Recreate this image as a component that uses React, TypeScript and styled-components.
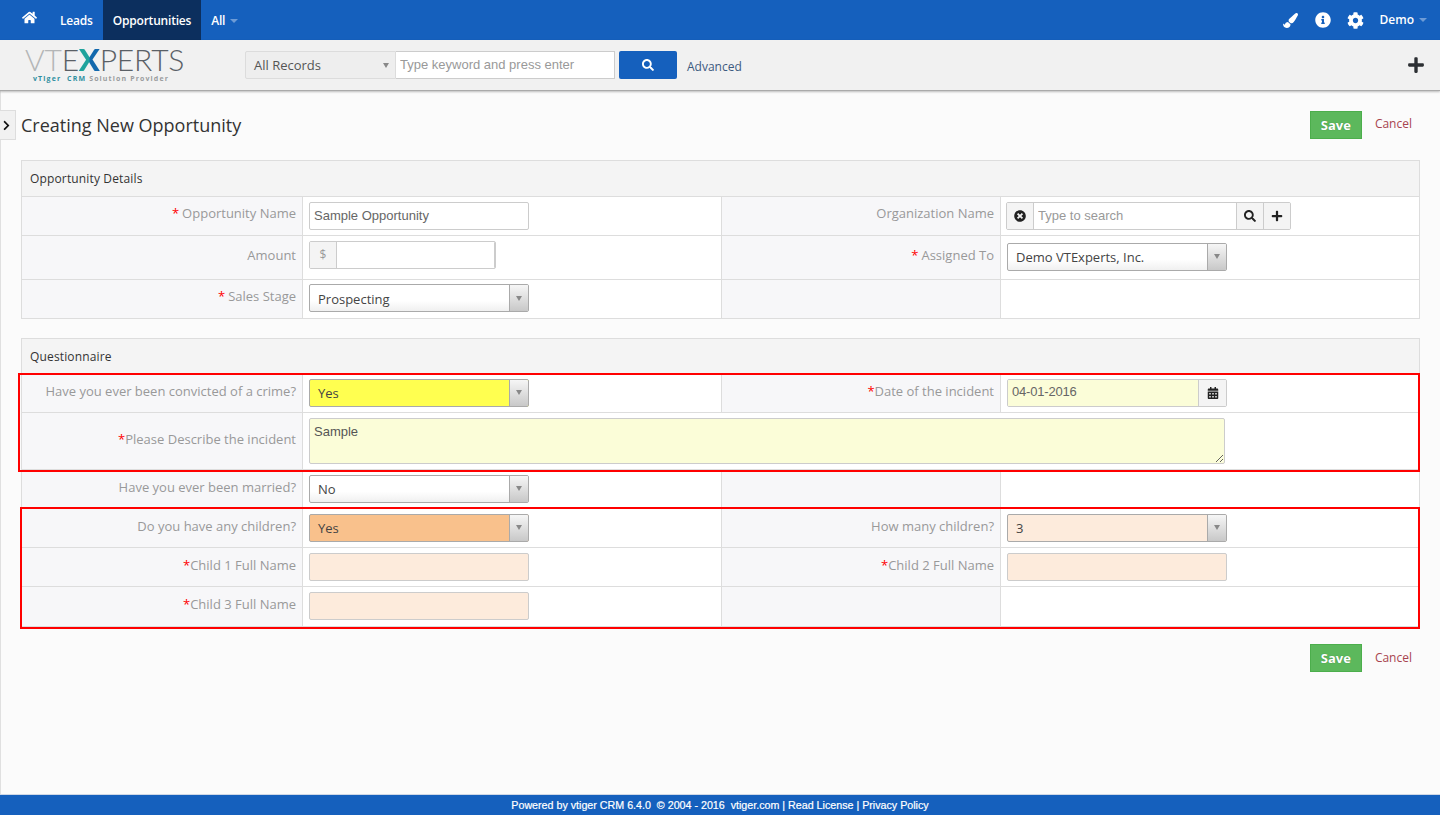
import React from "react";
import styled, { createGlobalStyle } from "styled-components";
import {
  FaHome, FaPaintBrush, FaInfoCircle, FaCog, FaPlus, FaSearch,
  FaCalendarAlt, FaChevronRight, FaTimesCircle,
} from "react-icons/fa";

const Global = createGlobalStyle`
  html, body { margin: 0; padding: 0; height: 100%; }
  body { font-family: "Open Sans", "Liberation Sans", sans-serif; font-size: 13px; color: #333; background: #fbfbfb; }
  * { box-sizing: border-box; }
`;

const Page = styled.div`
  height: 815px; display: flex; flex-direction: column; overflow: hidden;
`;

const TopBar = styled.header`
  height: 40px; flex: none; background: #1560bd; color: #fff; display: flex; align-items: stretch;
  padding-left: 22px; font-size: 12px; font-weight: 600;
`;
const NavHome = styled.div`
  width: 28px; display: flex; align-items: center; font-size: 15px; padding-bottom: 6px;
`;
const NavItem = styled.div<{ $active?: boolean }>`
  display: flex; align-items: center; gap: 5px; padding: 0 10px; letter-spacing: -0.2px;
  background: ${(p) => (p.$active ? "#0c2f5e" : "transparent")};
`;
const Caret = styled.span`
  width: 0; height: 0; border-left: 4px solid transparent; border-right: 4px solid transparent;
  border-top: 4px solid #6d9bd6; margin-top: 1px;
`;
const NavRight = styled.div`
  margin-left: auto; display: flex; align-items: center; padding-right: 13px;
`;
const NavIcon = styled.span<{ $size: number; $gap: number }>`
  display: flex; font-size: ${(p) => p.$size}px; margin-right: ${(p) => p.$gap}px;
`;
const UserName = styled.span`
  display: flex; align-items: center; gap: 5px; padding-bottom: 1px;
`;

const SearchBar = styled.div`
  height: 51px; flex: none; background: #f1f1f1; border-bottom: 1px solid #aaa;
  box-shadow: 0 1px 2px rgba(0,0,0,.25); display: flex; align-items: center;
  padding: 0 15px 0 25px; position: relative; z-index: 2;
`;
const Logo = styled.div`
  width: 220px; flex: none; display: flex; flex-direction: column; gap: 2px; margin-top: -1px;
`;
const LogoWord = styled.div`
  font-family: "Lato", "Open Sans", sans-serif; font-weight: 300; font-size: 30px; line-height: 26px;
  letter-spacing: -0.2px; color: #5a6066; white-space: nowrap; height: 26px;
`;
const LogoLight = styled.span`
  color: #b4b6b7;
`;
const LogoX = styled.span`
  font-weight: 900; font-size: 31px; background: linear-gradient(90deg, #1fa39c 0%, #1fa39c 48%, #1268ad 52%, #1268ad 100%);
  -webkit-background-clip: text; background-clip: text; color: transparent;
`;
const LogoTag = styled.div`
  font-size: 7px; line-height: 9px; font-weight: 700; letter-spacing: 1.13px; color: #9a9c9e; padding-left: 8px; white-space: nowrap;
`;
const LogoTeal = styled.span`
  color: #2f8fa0;
`;
const RecordSelect = styled.div`
  width: 151px; height: 28px; background: #eeeeee; border: 1px solid #dcdcdc; border-radius: 2px 0 0 2px;
  display: flex; align-items: center; justify-content: space-between; padding: 0 6px 0 8px; color: #555; font-size: 13px;
`;
const GreyArrow = styled.span`
  width: 0; height: 0; border-left: 3.5px solid transparent; border-right: 3.5px solid transparent; border-top: 5px solid #888;
`;
const SearchInput = styled.input`
  width: 219px; height: 28px; border: 1px solid #ccc; border-left: 0; background: #fff; padding: 0 4px 2px;
  font-family: "Liberation Sans", sans-serif; font-size: 13px; outline: none;
  &::placeholder { color: #999; opacity: 1; }
`;
const SearchButton = styled.div`
  width: 58px; height: 28px; margin-left: 4px; background: #1560bd; color: #fff; border-radius: 2px;
  display: flex; align-items: center; justify-content: center; font-size: 12px;
`;
const AdvancedLink = styled.span`
  margin-left: 10px; font-size: 12px; color: #3d5a80; padding-top: 2px;
`;
const QuickAdd = styled.span`
  margin-left: auto; display: flex; font-size: 18px; color: #2c2f33;
`;

const Content = styled.main`
  flex: 1; position: relative; border-left: 1px solid #e0e0e0; padding: 0 20px 0 20px;
`;
const SideToggle = styled.div`
  position: absolute; left: -1px; top: 19px; width: 16px; height: 30px; background: #f1f1f1;
  border: 1px solid #ddd; border-left: 0; display: flex; align-items: center; padding-left: 1px;
  font-size: 11px; color: #111;
`;
const TitleRow = styled.div`
  height: 69px; display: flex; align-items: center; justify-content: space-between; padding-bottom: 2px;
`;
const Title = styled.h1`
  margin: 0; font-size: 18px; font-weight: 400; color: #333;
`;
const Actions = styled.div`
  display: flex; align-items: center; gap: 13px; padding-right: 8px;
`;
const SaveButton = styled.div`
  width: 52px; height: 28px; background: #5cb85c; border: 1px solid #4cae4c; color: #fff; font-weight: 700; font-size: 13px;
  display: flex; align-items: center; justify-content: center; text-shadow: 0 0 1px rgba(0,0,0,.3);
`;
const CancelLink = styled.span`
  color: #a8434f; font-size: 12px; padding-bottom: 2px;
`;

const Section = styled.section<{ $gap?: number }>`
  border: 1px solid #ddd; border-bottom: 0; margin-bottom: ${(p) => p.$gap ?? 0}px; background: #fff;
`;
const SectionHead = styled.div`
  height: 36px; background: #f4f4f4; border-bottom: 1px solid #ddd; display: flex; align-items: center;
  padding-left: 8px; font-size: 12px; font-weight: 400; letter-spacing: 0.15px; color: #333;
`;
const Row = styled.div<{ $h: number }>`
  height: ${(p) => p.$h}px; display: grid; grid-template-columns: 281px 419px 279px 1fr;
  border-bottom: 1px solid #ddd;
`;
const LabelCell = styled.div<{ $lift?: number }>`
  background: #f7f7f9; border-right: 1px solid #ddd; display: flex; align-items: center; justify-content: flex-end;
  padding: 0 6px ${(p) => p.$lift ?? 7}px 0; color: #999; font-size: 13px; white-space: nowrap;
`;
const FieldCell = styled.div<{ $span?: number; $lift?: number }>`
  display: flex; align-items: center; padding: 0 0 ${(p) => p.$lift ?? 0}px 6px;
  ${(p) => (p.$span ? `grid-column: span ${p.$span};` : "border-right: 1px solid #ddd;")}
  &:last-child { border-right: 0; }
`;
const Star = styled.span`
  color: #f00; margin-right: 3px;
`;
const TightStar = styled.span`
  color: #f00;
`;
const TextInput = styled.input<{ $bg?: string }>`
  width: 220px; height: 28px; border: 1px solid #ccc; border-radius: 2px; background: ${(p) => p.$bg ?? "#fff"};
  padding: 0 4px 2px; font-family: "Liberation Sans", sans-serif; font-size: 13px; color: #666; outline: none;
`;
const Addon = styled.span<{ $w: number }>`
  width: ${(p) => p.$w}px; height: 100%; flex: none; background: #f4f4f4; display: flex; align-items: center; justify-content: center;
  color: #222; font-size: 12px;
`;
const Group = styled.div<{ $w: number; $shift?: number }>`
  width: ${(p) => p.$w}px; height: 28px; border: 1px solid #ccc; border-radius: 2px; display: flex; background: #fff; overflow: hidden;
  margin-left: ${(p) => p.$shift ?? 0}px;
`;
const GroupInput = styled.input<{ $bg?: string; $flat?: boolean }>`
  flex: 1; min-width: 0; height: 100%; border: 0; border-right: 1px solid #ccc; padding: 0 4px 2px;
  border-left: ${(p) => (p.$flat ? "0" : "1px solid #ccc")};
  letter-spacing: ${(p) => (p.$flat ? "-0.2px" : "0")};
  background: ${(p) => p.$bg ?? "#fff"}; font-family: "Liberation Sans", sans-serif; font-size: 13px; color: #666; outline: none;
  &::placeholder { color: #999; opacity: 1; }
`;
const Currency = styled(Addon)`
  color: #999; font-size: 12px;
`;
const Divider = styled.span`
  width: 1px; background: #ccc; flex: none;
`;
const SelectBox = styled.div<{ $bg?: string }>`
  width: 220px; height: 28px; border: 1px solid #aaa; border-radius: 2px; display: flex; overflow: hidden;
  background: ${(p) => p.$bg ?? "linear-gradient(#fff 60%, #f0f0f0)"}; color: #444; font-size: 13px;
`;
const SelectValue = styled.span`
  flex: 1; padding: 1px 0 0 8px; display: flex; align-items: center;
`;
const SelectArrow = styled.span`
  width: 19px; flex: none; background: linear-gradient(#f6f6f6, #c8c8c8); border-left: 1px solid #aaa;
  display: flex; align-items: center; justify-content: center;
`;
const Area = styled.textarea`
  width: 916px; height: 46px; border: 1px solid #ccc; border-radius: 2px; background: #fbfdd8; display: block;
  padding: 5px 4px; font-family: "Liberation Sans", sans-serif; font-size: 13px; color: #555; outline: none; resize: vertical;
`;
const Highlight = styled.div<{ $top: number; $left: number; $right: number; $bottom: number }>`
  position: relative;
  &::after {
    content: ""; position: absolute; top: ${(p) => p.$top}px; left: ${(p) => p.$left}px; right: ${(p) => p.$right}px; bottom: ${(p) => p.$bottom}px;
    border: 2px solid #f00; pointer-events: none;
  }
`;
const BottomActions = styled.div`
  display: flex; justify-content: flex-end; margin-top: 17px;
`;

const Footer = styled.footer`
  height: 21px; flex: none; background: #1560bd; border-top: 1px solid #cfd8e6; color: #fff; text-align: center;
  font-family: "Liberation Sans", sans-serif; font-size: 10.7px; line-height: 20px; white-space: pre;
  -webkit-text-stroke: 0.2px #fff;
`;

const Select = ({ value, bg }: { value: string; bg?: string }) => (
  <SelectBox $bg={bg}>
    <SelectValue>{value}</SelectValue>
    <SelectArrow><GreyArrow /></SelectArrow>
  </SelectBox>
);

const SaveBar = () => (
  <Actions>
    <SaveButton>Save</SaveButton>
    <CancelLink>Cancel</CancelLink>
  </Actions>
);

export default function App() {
  return (
    <Page>
      <Global />
      <TopBar>
        <NavHome><FaHome /></NavHome>
        <NavItem>Leads</NavItem>
        <NavItem $active>Opportunities</NavItem>
        <NavItem>All <Caret /></NavItem>
        <NavRight>
          <NavIcon $size={15} $gap={17}><FaPaintBrush /></NavIcon>
          <NavIcon $size={16} $gap={16}><FaInfoCircle /></NavIcon>
          <NavIcon $size={17} $gap={16}><FaCog /></NavIcon>
          <UserName>Demo <Caret /></UserName>
        </NavRight>
      </TopBar>
      <SearchBar>
        <Logo>
          <LogoWord><LogoLight>VT</LogoLight>E<LogoX>X</LogoX>PERTS</LogoWord>
          <LogoTag><LogoTeal>vTiger&nbsp; CRM</LogoTeal> Solution Provider</LogoTag>
        </Logo>
        <RecordSelect>All Records <GreyArrow /></RecordSelect>
        <SearchInput placeholder="Type keyword and press enter" readOnly />
        <SearchButton><FaSearch /></SearchButton>
        <AdvancedLink>Advanced</AdvancedLink>
        <QuickAdd><FaPlus /></QuickAdd>
      </SearchBar>
      <Content>
        <SideToggle><FaChevronRight /></SideToggle>
        <TitleRow>
          <Title>Creating New Opportunity</Title>
          <SaveBar />
        </TitleRow>
        <Section $gap={19}>
          <SectionHead>Opportunity Details</SectionHead>
          <Row $h={39}>
            <LabelCell><Star>*</Star>Opportunity Name</LabelCell>
            <FieldCell><TextInput value="Sample Opportunity" readOnly /></FieldCell>
            <LabelCell>Organization Name</LabelCell>
            <FieldCell>
              <Group $w={285} $shift={-1}>
                <Addon $w={26}><FaTimesCircle /></Addon>
                <GroupInput placeholder="Type to search" readOnly />
                <Addon $w={26}><FaSearch /></Addon>
                <Divider />
                <Addon $w={26}><FaPlus /></Addon>
              </Group>
            </FieldCell>
          </Row>
          <Row $h={44}>
            <LabelCell $lift={5}>Amount</LabelCell>
            <FieldCell $lift={6}>
              <Group $w={187}>
                <Currency $w={26}>$</Currency>
                <GroupInput readOnly />
              </Group>
            </FieldCell>
            <LabelCell $lift={5}><Star>*</Star>Assigned To</LabelCell>
            <FieldCell $lift={2}><Select value="Demo VTExperts, Inc." /></FieldCell>
          </Row>
          <Row $h={39}>
            <LabelCell><Star>*</Star>Sales Stage</LabelCell>
            <FieldCell $lift={2}><Select value="Prospecting" /></FieldCell>
            <LabelCell />
            <FieldCell />
          </Row>
        </Section>
        <Section>
          <SectionHead>Questionnaire</SectionHead>
          <Highlight $top={-2} $left={-4} $right={-1} $bottom={-2}>
            <Row $h={38}>
              <LabelCell $lift={5}>Have you ever been convicted of a crime?</LabelCell>
              <FieldCell $lift={2}><Select value="Yes" bg="#ffff50" /></FieldCell>
              <LabelCell $lift={5}><TightStar>*</TightStar>Date of the incident</LabelCell>
              <FieldCell $lift={2}>
                <Group $w={220}>
                  <GroupInput $flat $bg="#fbfdd8" value="04-01-2016" readOnly />
                  <Addon $w={27}><FaCalendarAlt /></Addon>
                </Group>
              </FieldCell>
            </Row>
            <Row $h={57}>
              <LabelCell $lift={5}><TightStar>*</TightStar>Please Describe the incident</LabelCell>
              <FieldCell $span={3}><Area value="Sample" readOnly /></FieldCell>
            </Row>
          </Highlight>
          <Row $h={38}>
            <LabelCell $lift={3}>Have you ever been married?</LabelCell>
            <FieldCell><Select value="No" /></FieldCell>
            <LabelCell />
            <FieldCell />
          </Row>
          <Highlight $top={-1} $left={-2} $right={-1} $bottom={-2}>
            <Row $h={40}>
              <LabelCell $lift={3}>Do you have any children?</LabelCell>
              <FieldCell><Select value="Yes" bg="#f9c18c" /></FieldCell>
              <LabelCell $lift={3}>How many children?</LabelCell>
              <FieldCell><Select value="3" bg="#fdebdc" /></FieldCell>
            </Row>
            <Row $h={39}>
              <LabelCell $lift={5}><TightStar>*</TightStar>Child 1 Full Name</LabelCell>
              <FieldCell><TextInput $bg="#fdebdc" readOnly /></FieldCell>
              <LabelCell $lift={5}><TightStar>*</TightStar>Child 2 Full Name</LabelCell>
              <FieldCell><TextInput $bg="#fdebdc" readOnly /></FieldCell>
            </Row>
            <Row $h={40}>
              <LabelCell $lift={5}><TightStar>*</TightStar>Child 3 Full Name</LabelCell>
              <FieldCell $lift={2}><TextInput $bg="#fdebdc" readOnly /></FieldCell>
              <LabelCell />
              <FieldCell />
            </Row>
          </Highlight>
        </Section>
        <BottomActions><SaveBar /></BottomActions>
      </Content>
      <Footer>{"Powered by vtiger CRM 6.4.0  © 2004 - 2016  vtiger.com | Read License | Privacy Policy"}</Footer>
    </Page>
  );
}
